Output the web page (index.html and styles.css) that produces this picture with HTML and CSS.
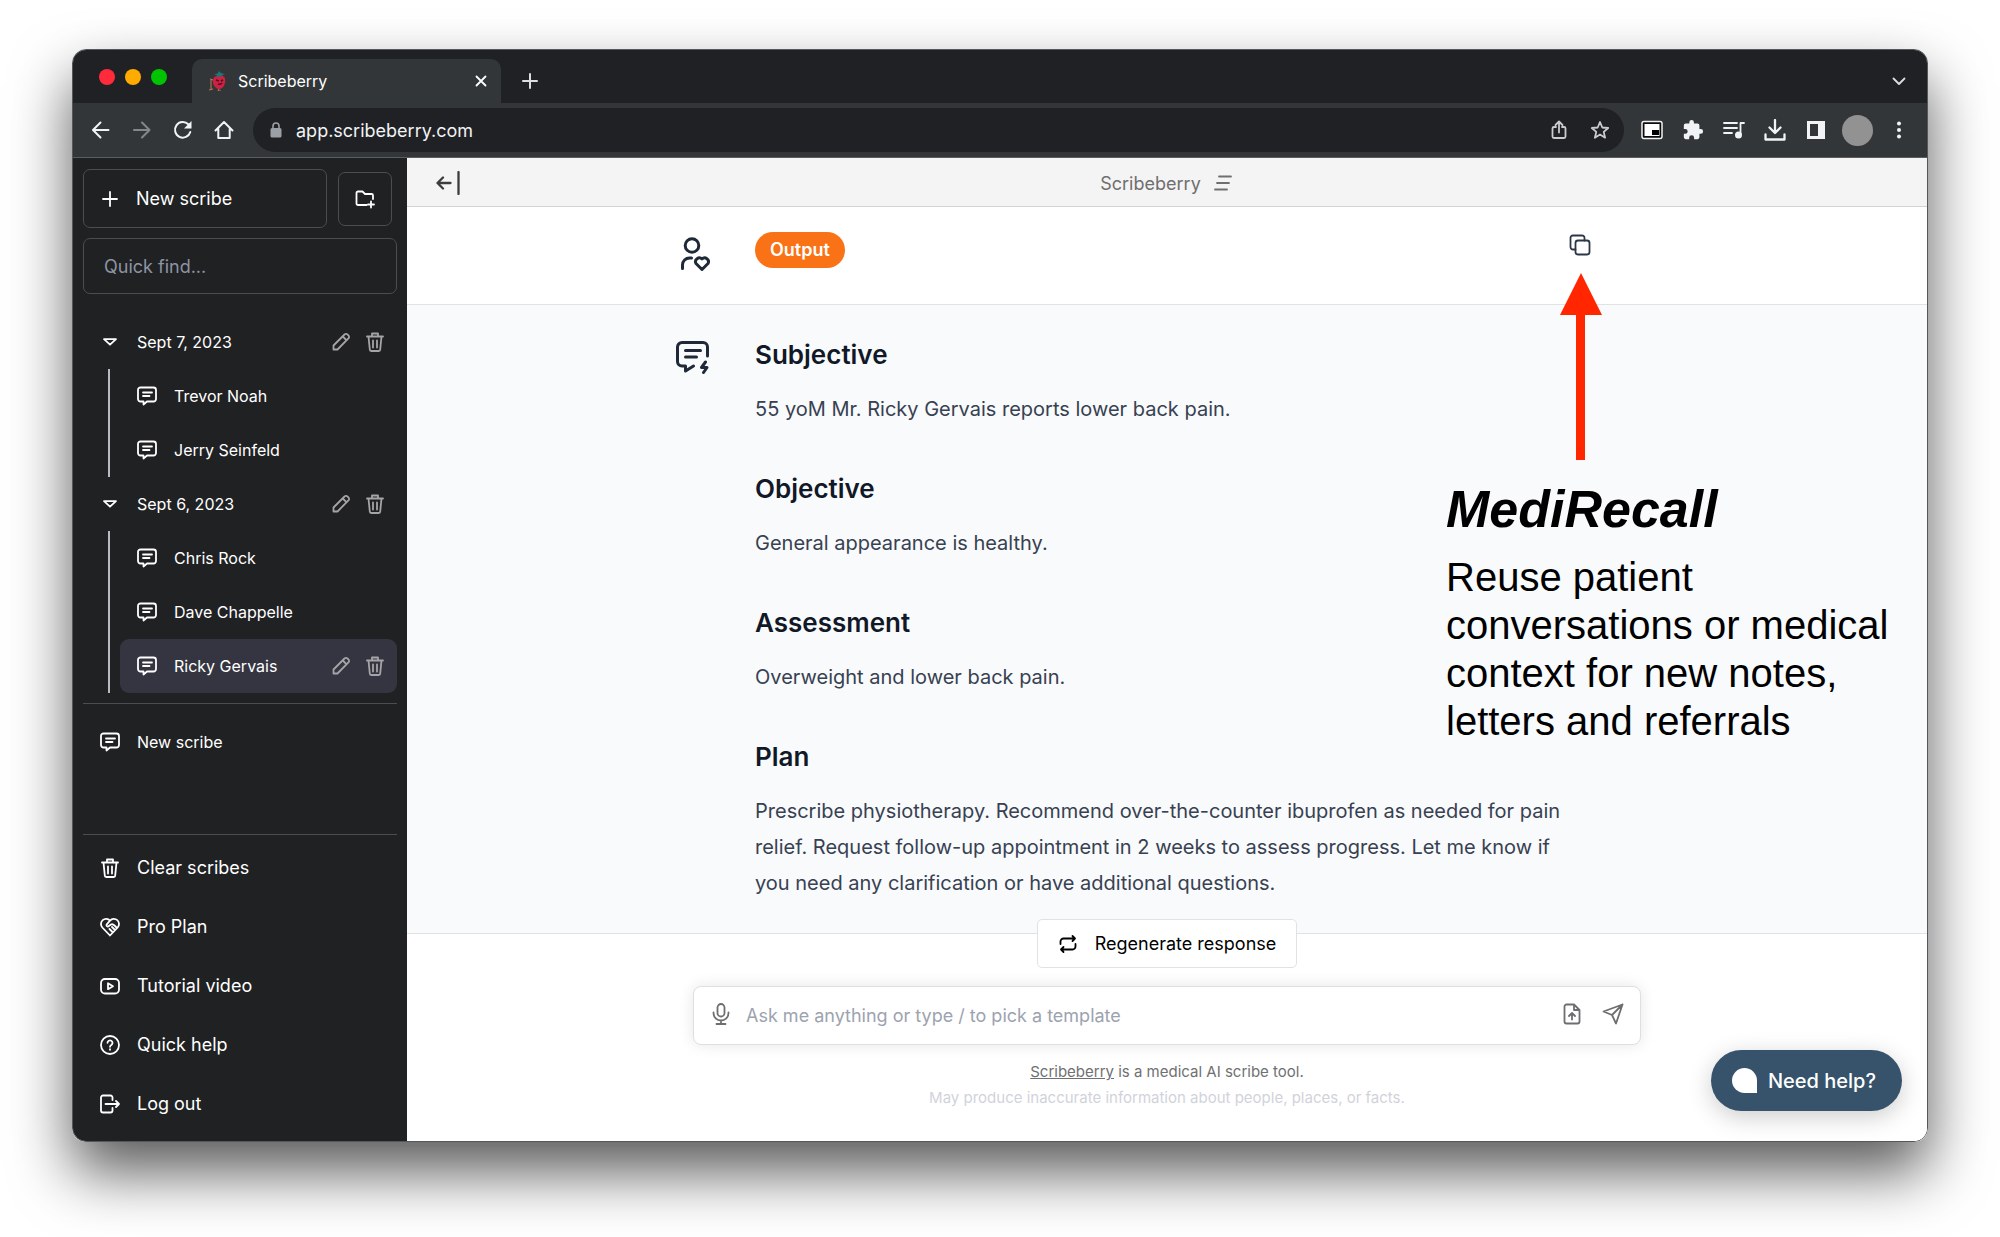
FILE: index.html
```html
<!DOCTYPE html>
<html lang="en">
<head>
<meta charset="utf-8">
<meta name="viewport" content="width=device-width, initial-scale=1">
<title>Scribeberry</title>
<link rel="stylesheet" href="styles.css">
</head>
<body>
<svg class="sprite" aria-hidden="true">
  <symbol id="i-message" viewBox="0 0 20 20"><path d="M3.500 1.500h13a2.500 2.500 0 0 1 2.500 2.500v9a2.500 2.500 0 0 1-2.500 2.500H10L6.500 18.500v-3h-3A2.500 2.500 0 0 1 1 13V4a2.500 2.500 0 0 1 2.500-2.500zM6 6.500h9M6 10h6.500"/></symbol>
  <symbol id="i-pencil" viewBox="0 0 20 20"><path d="M2.500 17.500v-4L13.500 2.500a2 2 0 0 1 3 0l.9.9a2 2 0 0 1 0 3L6.500 17.500zM11.800 4.500l3.800 3.800"/></symbol>
  <symbol id="i-trash" viewBox="0 0 20 20"><path d="M2 4.500h16M3.500 4.500l1.300 13a1.500 1.500 0 0 0 1.500 1.500h7.400a1.500 1.500 0 0 0 1.500-1.500l1.300-13M7 4.500V1.500h6v3M8 8.500v7M12 8.500v7"/></symbol>
  <symbol id="i-caret" viewBox="0 0 20 20"><path d="M4 7.200h12L10 12.700z"/></symbol>
  <symbol id="i-plus" viewBox="0 0 20 20"><path d="M10 3v14M3 10h14"/></symbol>
</svg>

<div class="window">
  <div class="tabstrip">
    <div class="lights"><span class="light red"></span><span class="light amber"></span><span class="light green"></span></div>
    <div class="tab">
      <svg class="favicon" viewBox="0 0 20 20" aria-hidden="true"><path d="M8 5q6-3 9 2 1 4-1 8-3 4-6 3-4-2-5-6-1-5 3-7z" fill="#cf1f43"/><path d="M6 4l4-2 1-2 2 2 4 1-3 1 1 2-3-1-3 2V4z" fill="#1f7775"/><path d="M3 9v9M5 9L2 8M5 18l-4 1M11 18l-1 2h3" stroke="#b58052" fill="none"/><path d="M8 9l3 1M15 9l-2 1M10 13q2 1 4-1" stroke="#4d0b25" stroke-width="1.500" fill="none"/></svg>
      <span class="tab-title">Scribeberry</span>
      <button class="bare" aria-label="Close tab"><svg class="s20 line" viewBox="0 0 20 20"><path d="M5.500 5.500l9 9M14.500 5.500l-9 9"/></svg></button>
    </div>
    <button class="bare newtab" aria-label="New tab"><svg class="s20 line" viewBox="0 0 20 20"><path d="M10 3v14M3 10h14"/></svg></button>
    <button class="bare tabsearch" aria-label="Search tabs"><svg class="s20 line" viewBox="0 0 20 20"><path d="M4.500 7.500L10 13l5.500-5.500"/></svg></button>
  </div>

  <div class="toolbar">
    <div class="nav">
      <button class="bare" aria-label="Back"><svg class="s20 line" viewBox="0 0 20 20"><path d="M17.500 10H2.500M9.500 2.500L2 10l7.500 7.500"/></svg></button>
      <button class="bare dim" aria-label="Forward"><svg class="s20 line" viewBox="0 0 20 20"><path d="M2 10h15M10 2.500l7.500 7.500-7.500 7.500"/></svg></button>
      <button class="bare" aria-label="Reload"><svg class="s20 line" viewBox="0 0 20 20"><path d="M17.300 12a7.800 7.800 0 1 1-2-7.700L17 6"/><path d="M18.500 1v7.500H11z" fill="currentColor" stroke="none"/></svg></button>
      <button class="bare" aria-label="Home"><svg class="s20 line" viewBox="0 0 20 20"><path d="M1.500 10.500L10 2l8.500 8.500M4.300 8.500v9.500h11.400V8.500"/></svg></button>
    </div>
    <div class="omnibox">
      <svg class="lock" viewBox="0 0 12 16" aria-hidden="true"><rect x="0.500" y="6" width="11" height="9.500" rx="1.500" fill="currentColor"/><path d="M3 7V4a3 3 0 0 1 6 0v3" fill="none" stroke="currentColor" stroke-width="1.600"/></svg>
      <input class="url" aria-label="Address" value="app.scribeberry.com">
      <button class="bare" aria-label="Share"><svg class="s20 line soft" viewBox="0 0 20 20"><path d="M7 7H5a1.500 1.500 0 0 0-1.500 1.500v8A1.500 1.500 0 0 0 5 18h10a1.500 1.500 0 0 0 1.500-1.500v-8A1.500 1.500 0 0 0 15 7h-2M10 12.500V2M6.500 5L10 1.500 13.500 5"/></svg></button>
      <button class="bare" aria-label="Bookmark"><svg class="s20 line soft" viewBox="0 0 20 20"><path d="M10 2l2.300 5.500 5.900.5-4.500 3.900 1.400 5.800L10 14.600l-5.100 3.100 1.400-5.800L1.800 8l5.900-.5z"/></svg></button>
    </div>
    <div class="actions">
      <button class="bare" aria-label="Picture in picture"><svg class="s22" viewBox="0 0 22 22"><rect x="1" y="2.500" width="20" height="17" rx="2" fill="#0c0c0c" stroke="#f1f3f4" stroke-width="1.500"/><path d="M3.500 5h15v12h-15z" fill="#fff"/><path d="M11 11h7v5h-7z" fill="#000"/></svg></button>
      <button class="bare" aria-label="Extensions"><svg class="s22" viewBox="0 0 24 24"><path fill="currentColor" d="M20.500 11H19V7a2 2 0 0 0-2-2h-4V3.500a2.500 2.500 0 0 0-5 0V5H4a2 2 0 0 0-2 2v3.800h1.500a2.700 2.700 0 0 1 0 5.400H2V20a2 2 0 0 0 2 2h3.800v-1.500a2.700 2.700 0 0 1 5.400 0V22H17a2 2 0 0 0 2-2v-4h1.500a2.500 2.500 0 0 0 0-5z"/></svg></button>
      <button class="bare" aria-label="Media"><svg class="s22 line" viewBox="0 0 22 22"><path d="M1 4h13M1 9h13M1 14h8M21 4h-3.500v11"/><circle cx="15.500" cy="16" r="2.600" fill="currentColor"/></svg></button>
      <button class="bare" aria-label="Downloads"><svg class="s22 line thick" viewBox="0 0 22 22"><path d="M11 1v12.500M5.500 8.500l5.500 5.500 5.500-5.500M1.500 15.500v5h19v-5"/></svg></button>
      <button class="bare" aria-label="Side panel"><svg class="s22" viewBox="0 0 22 22"><path fill="currentColor" fill-rule="evenodd" d="M2 2h18v18H2zM5 5v12h8V5z"/></svg></button>
      <button class="avatar" aria-label="Profile"></button>
      <button class="bare" aria-label="Menu"><svg class="s22" viewBox="0 0 22 22" fill="currentColor"><circle cx="11" cy="4.500" r="2"/><circle cx="11" cy="11" r="2"/><circle cx="11" cy="17.500" r="2"/></svg></button>
    </div>
  </div>

  <div class="app">
    <aside class="sidebar">
      <div class="create">
        <button class="new-scribe"><svg class="s20 line"><use href="#i-plus"/></svg>New scribe</button>
        <button class="new-folder" aria-label="New folder"><svg class="s20 line" viewBox="0 0 20 20"><path d="M11.500 16H3a1.500 1.500 0 0 1-1.500-1.500V4A1.500 1.500 0 0 1 3 2.500h4.500L10 5h6.500A1.500 1.500 0 0 1 18 6.500V10M16 12.500v6M13 15.500h6"/></svg></button>
      </div>
      <input class="find" type="search" aria-label="Quick find" placeholder="Quick find...">

      <nav class="folders">
        <div class="row"><svg class="s20 line"><use href="#i-caret"/></svg><span class="name">Sept 7, 2023</span><button class="bare tool" aria-label="Rename"><svg class="s20 line"><use href="#i-pencil"/></svg></button><button class="bare tool" aria-label="Delete"><svg class="s20 line"><use href="#i-trash"/></svg></button></div>
        <ul class="scribes">
          <li class="row"><svg class="s20 line"><use href="#i-message"/></svg><a class="name" href="#">Trevor Noah</a></li>
          <li class="row"><svg class="s20 line"><use href="#i-message"/></svg><a class="name" href="#">Jerry Seinfeld</a></li>
        </ul>
        <div class="row"><svg class="s20 line"><use href="#i-caret"/></svg><span class="name">Sept 6, 2023</span><button class="bare tool" aria-label="Rename"><svg class="s20 line"><use href="#i-pencil"/></svg></button><button class="bare tool" aria-label="Delete"><svg class="s20 line"><use href="#i-trash"/></svg></button></div>
        <ul class="scribes">
          <li class="row"><svg class="s20 line"><use href="#i-message"/></svg><a class="name" href="#">Chris Rock</a></li>
          <li class="row"><svg class="s20 line"><use href="#i-message"/></svg><a class="name" href="#">Dave Chappelle</a></li>
          <li class="row current"><svg class="s20 line"><use href="#i-message"/></svg><a class="name" href="#">Ricky Gervais</a><button class="bare tool" aria-label="Rename"><svg class="s20 line"><use href="#i-pencil"/></svg></button><button class="bare tool" aria-label="Delete"><svg class="s20 line"><use href="#i-trash"/></svg></button></li>
        </ul>
      </nav>
      <div class="loose">
        <div class="row"><svg class="s20 line"><use href="#i-message"/></svg><a class="name" href="#">New scribe</a></div>
      </div>

      <div class="menu">
        <button class="menu-item"><svg class="s20 line"><use href="#i-trash"/></svg>Clear scribes</button>
        <button class="menu-item"><svg class="s20 line" viewBox="0 0 20 20"><path d="M10 18.500L2.300 10.500A4.700 4.700 0 0 1 10 3.600a4.700 4.700 0 0 1 7.700 6.900zM10 3.600L6.800 7.300a1.300 1.300 0 0 0 2 1.800L11 7.500c1.500-.8 2.500 0 3.500 1l2.500 2.500M9.500 12l2.500 2.500M12 10l2.500 2.500"/></svg>Pro Plan</button>
        <button class="menu-item"><svg class="s20 line" viewBox="0 0 20 20"><rect x="1" y="3" width="18" height="14.500" rx="4"/><path d="M8 7.200v6l5-3z"/></svg>Tutorial video</button>
        <button class="menu-item"><svg class="s20 line" viewBox="0 0 20 20"><circle cx="10" cy="10" r="9"/><path d="M7.500 7.800A2.500 2.500 0 1 1 11.300 10c-1 .6-1.300.9-1.300 1.800M10 14.200v.6"/></svg>Quick help</button>
        <button class="menu-item"><svg class="s20 line" viewBox="0 0 20 20"><path d="M12.500 6V3.500a2 2 0 0 0-2-2H3a2 2 0 0 0-2 2v13a2 2 0 0 0 2 2h7.500a2 2 0 0 0 2-2V14M5.500 10H19M16 7l3 3-3 3"/></svg>Log out</button>
      </div>
    </aside>

    <main class="main">
      <header class="bar">
        <button class="bare collapse" aria-label="Collapse sidebar"><svg class="collapse-icon line thick" viewBox="0 0 24 24"><path d="M14.500 12H2M7 6.500L1.500 12 7 17.500M22.500 1v22"/></svg></button>
        <h1 class="bar-title">Scribeberry</h1>
        <button class="bare" aria-label="Options"><svg class="s20 line" viewBox="0 0 20 20"><path d="M5 3.500h12M3 10h12M1 16.500h12"/></svg></button>
      </header>

      <section class="prompt">
        <div class="column">
          <svg class="role line" viewBox="0 0 34 34" aria-hidden="true"><circle cx="16" cy="8.500" r="6.800"/><path d="M6.500 31.500v-3.500a7 7 0 0 1 7-7h2M26 32.500l-6-6a3.800 3.800 0 0 1 6-4.500 3.800 3.800 0 0 1 6 4.500z"/></svg>
          <div><span class="pill">Output</span></div>
          <button class="bare copy" aria-label="Copy"><svg class="s22 line" viewBox="0 0 22 22"><rect x="6.500" y="6.500" width="14" height="14" rx="2.500"/><path d="M6.500 15.500H4A2.500 2.500 0 0 1 1.500 13V4A2.500 2.500 0 0 1 4 1.500h9A2.500 2.500 0 0 1 15.500 4v2.500"/></svg></button>
        </div>
      </section>

      <section class="answer">
        <div class="column">
          <svg class="role line" viewBox="0 0 34 34" aria-hidden="true"><path d="M31.500 16V7A4.500 4.500 0 0 0 27 2.500H6A4.500 4.500 0 0 0 1.500 7v14.500A4.500 4.500 0 0 0 6 26h3.500v5l8-5M9.500 10.500h15M9.500 17h11M29.500 22L25.500 27.500H31l-3.500 5"/></svg>
          <article class="note">
            <h2>Subjective</h2>
            <p>55 yoM Mr. Ricky Gervais reports lower back pain.</p>
            <h2>Objective</h2>
            <p>General appearance is healthy.</p>
            <h2>Assessment</h2>
            <p>Overweight and lower back pain.</p>
            <h2>Plan</h2>
            <p>Prescribe physiotherapy. Recommend over-the-counter ibuprofen as needed for pain relief. Request follow-up appointment in 2 weeks to assess progress. Let me know if you need any clarification or have additional questions.</p>
          </article>
        </div>
      </section>

      <footer class="foot">
        <button class="regen"><svg class="s20 line" viewBox="0 0 20 20"><path d="M2.500 10V7.500a3 3 0 0 1 3-3h11.500M14.500 2l2.500 2.500L14.500 7M17.500 10v2.500a3 3 0 0 1-3 3H3M5.500 13L3 15.500 5.500 18"/></svg>Regenerate response</button>
        <form class="composer">
          <button type="button" class="bare" aria-label="Dictate"><svg class="s22 line" viewBox="0 0 22 22"><rect x="7.500" y="1" width="7" height="12.500" rx="3.500"/><path d="M3.500 9.500v.5a7.500 7.500 0 0 0 15 0v-.5M11 17.500V21M6.500 21h9"/></svg></button>
          <input class="ask" aria-label="Message" placeholder="Ask me anything or type / to pick a template">
          <button type="button" class="bare" aria-label="Upload file"><svg class="s22 line" viewBox="0 0 22 22"><path d="M13 1.500H5.500a2 2 0 0 0-2 2v15a2 2 0 0 0 2 2h11a2 2 0 0 0 2-2V7zV7h5.500M11 16.500v-6M8 13l3-3 3 3"/></svg></button>
          <button type="button" class="bare" aria-label="Send"><svg class="s22 line" viewBox="0 0 22 22"><path d="M20.500 1.500L14 20.500l-4-8.500L1.500 8.500zM20.500 1.500L10 12"/></svg></button>
        </form>
        <p class="about"><a href="#">Scribeberry</a> is a medical AI scribe tool.</p>
        <p class="caution">May produce inaccurate information about people, places, or facts.</p>
      </footer>

      <div class="callout">
        <svg class="arrow" viewBox="0 0 42 187" aria-hidden="true"><path d="M21 0l21 42H25v145h-9V42H0z" fill="#ff2600"/></svg>
        <p class="callout-title">MediRecall</p>
        <p class="callout-text">Reuse patient conversations or medical context for new notes, letters and referrals</p>
      </div>
      <button class="help"><span class="bubble"></span>Need help?</button>
    </main>
  </div>
</div>
</body>
</html>
```
FILE: styles.css
```css
* { box-sizing: border-box; }

body {
  margin: 0;
  min-height: 100vh;
  padding: 49px 72px 95px;
  display: flex;
  background: #fff;
  font-family: Inter, "Liberation Sans", sans-serif;
  font-size: 16px;
}

h1, h2, p, ul { margin: 0; padding: 0; }
ul { list-style: none; }
button, input { font: inherit; color: inherit; }
svg { flex: none; display: block; }
a { color: inherit; }

.sprite { position: absolute; width: 0; height: 0; }
.line {
  fill: none;
  stroke: currentColor;
  stroke-width: 1.800;
  stroke-linecap: round;
  stroke-linejoin: round;
}
.thick { stroke-width: 2.300; }
.s20 { width: 20px; height: 20px; }
.s22 { width: 22px; height: 22px; }
.bare { padding: 0; border: 0; background: none; display: flex; }

.window {
  flex: 1;
  min-width: 0;
  display: flex;
  flex-direction: column;
  border: 1px solid #55585a;
  border-radius: 14px;
  overflow: hidden;
  box-shadow: 0 30px 60px rgba(0, 0, 0, .65);
}

/* Browser chrome */
.tabstrip {
  height: 53px;
  padding: 9px 18px 0 26px;
  display: flex;
  align-items: flex-start;
  background: #202124;
  color: #dcdee1;
}
.lights { display: flex; gap: 10px; margin: 10px 25px 0 0; }
.light { width: 16px; height: 16px; border-radius: 50%; }
.red { background: #ff2b3a; }
.amber { background: #ffab00; }
.green { background: #00c400; }
.tab {
  width: 309px;
  height: 44px;
  padding: 0 10px 0 16px;
  display: flex;
  align-items: center;
  gap: 10px;
  border-radius: 10px 10px 0 0;
  background: #323639;
  color: #fff;
}
.favicon { width: 20px; height: 20px; }
.tab-title { flex: 1; }
.newtab { margin: 12px 0 0 19px; }
.newtab .line { stroke-width: 2; }
.tabsearch { margin: 12px 0 0 auto; }

.toolbar {
  height: 55px;
  padding: 0 17px 0 18px;
  display: flex;
  align-items: center;
  background: #323639;
  border-bottom: 1px solid #5b5e61;
  color: #f1f3f4;
}
.nav { display: flex; gap: 21px; margin-right: 19px; }
.nav .line { stroke-width: 2; }
.dim { color: #85888a; }
.omnibox {
  flex: 1;
  height: 44px;
  padding: 0 14px 0 17px;
  display: flex;
  align-items: center;
  border-radius: 22px;
  background: #202124;
}
.lock { width: 12px; height: 16px; margin-right: 14px; color: #9aa0a6; }
.url { flex: 1; min-width: 0; border: 0; padding: 0; background: none; outline: 0; font-size: 18px; }
.omnibox .bare + .bare { margin-left: 21px; }
.soft { color: #c9cccf; }
.actions { display: flex; align-items: center; gap: 19px; margin-left: 17px; }
.avatar { width: 31px; height: 31px; margin: 0 -4px; padding: 0; border: 0; border-radius: 50%; background: #929292; }

/* Sidebar */
.app { flex: 1; display: flex; }
.sidebar {
  width: 334px;
  flex: none;
  padding: 11px 10px 8px;
  display: flex;
  flex-direction: column;
  background: #202123;
  color: #fff;
}
.create { display: flex; align-items: center; gap: 11px; padding-right: 5px; }
.new-scribe, .new-folder, .find {
  border: 1px solid #4d4d4f;
  border-radius: 7px;
  background: none;
}
.new-scribe {
  flex: 1;
  height: 59px;
  padding: 0 16px;
  display: flex;
  align-items: center;
  gap: 16px;
  font-size: 18px;
}
.new-folder { width: 54px; height: 54px; padding: 0 16px; }
.find { height: 56px; margin-top: 10px; padding: 0 20px; font-size: 18px; appearance: none; }
.find::placeholder { color: #8e94a3; opacity: 1; }
.folders { margin-top: 21px; padding-bottom: 10px; border-bottom: 1px solid #4d4d4f; }
.row {
  height: 54px;
  padding: 0 12px 0 17px;
  display: flex;
  align-items: center;
  border-radius: 9px;
}
.name { flex: 1; margin-left: 17px; text-decoration: none; }
.tool { margin-left: 14px; color: #a5a5a7; }
.scribes { margin-left: 25px; padding-left: 10px; border-left: 2px solid #b9bac4; }
.current { background: #343541; }
.loose { flex: 1; padding-top: 11px; }
.menu { padding-top: 3px; border-top: 1px solid #4d4d4f; }
.menu-item {
  width: 100%;
  height: 59px;
  padding: 0 17px;
  display: flex;
  align-items: center;
  gap: 17px;
  border: 0;
  background: none;
  font-size: 18px;
}

/* Conversation */
.main { flex: 1; min-width: 0; position: relative; display: flex; flex-direction: column; background: #fff; }
.bar {
  height: 49px;
  padding-top: 2px;
  display: flex;
  align-items: center;
  justify-content: center;
  gap: 13px;
  background: #f4f4f4;
  border-bottom: 1px solid #d3d3d3;
  color: #6f6f6f;
}
.collapse { position: absolute; left: 29px; color: #3c3c3c; }
.collapse-icon { width: 24px; height: 24px; }
.bar-title { font-size: 18px; font-weight: 400; }
.column {
  max-width: 982px;
  margin: 0 auto;
  padding-right: 67px;
  display: flex;
  align-items: flex-start;
}
.role { width: 34px; height: 34px; margin-right: 45px; stroke-width: 3; color: #1f2937; }
.prompt { height: 98px; padding-top: 25px; border-bottom: 1px solid #e1e2e4; }
.prompt .role { margin-top: 5px; }
.pill {
  display: block;
  padding: 0 15px;
  border-radius: 18px;
  background: #f97316;
  color: #fff;
  font-size: 18px;
  font-weight: 600;
  line-height: 36px;
}
.copy { margin: 2px 0 0 auto; color: #2b3648; }
.answer { flex: 1; padding: 32px 0 31px; background: #f9fafc; border-bottom: 1px solid #e1e2e4; }
.answer .role { margin-top: 3px; }
.note { flex: 1; line-height: 36px; font-optical-sizing: none; }
.note h2 { margin-bottom: 18px; font-size: 26px; font-weight: 600; color: #111827; font-optical-sizing: auto; }
.note p { padding-right: 6px; font-size: 20px; color: #374151; }
.note p + h2 { margin-top: 44px; }

.foot { padding-bottom: 30px; display: flex; flex-direction: column; align-items: center; }
.regen {
  height: 49px;
  margin-top: -15px;
  padding: 0 20px;
  display: flex;
  align-items: center;
  gap: 17px;
  border: 1px solid #e2e2e4;
  border-radius: 5px;
  background: #fff;
  color: #000;
  font-size: 18px;
}
.composer {
  width: calc(100% - 40px);
  max-width: 948px;
  height: 59px;
  margin: 18px 0 14px;
  padding: 0 16px;
  display: flex;
  align-items: center;
  border: 1px solid #dfdfe1;
  border-radius: 8px;
  background: #fff;
  box-shadow: 0 0 15px rgba(0, 0, 0, .1);
  color: #6e6e70;
}
.ask { flex: 1; min-width: 0; margin: 0 14px; padding: 0; border: 0; background: none; outline: 0; font-size: 18px; }
.ask::placeholder { color: #9ca3af; opacity: 1; }
.composer .bare { margin-bottom: 4px; }
.composer .bare + .bare { margin-left: 19px; }
.about, .caution { font-size: 15px; line-height: 26px; color: #707072; }
.caution { color: #d1d3da; }

/* Overlays */
.callout {
  position: absolute;
  top: 115px;
  right: 0;
  width: 481px;
  color: #000;
  font-family: "Liberation Sans", Arial, sans-serif;
}
.arrow { width: 42px; height: 187px; margin-left: 114px; }
.callout-title { margin-top: 19px; font-size: 52px; line-height: 60px; font-weight: 700; font-style: italic; }
.callout-text { margin-top: 14px; padding-right: 20px; font-size: 40px; line-height: 48px; }
.help {
  position: absolute;
  right: 25px;
  bottom: 30px;
  height: 61px;
  padding: 0 26px 0 21px;
  display: flex;
  align-items: center;
  gap: 11px;
  border: 0;
  border-radius: 31px;
  background: #36536b;
  color: #fff;
  font-size: 20px;
  font-weight: 500;
  box-shadow: 0 6px 24px rgba(0, 0, 0, .2);
}
.bubble { width: 25px; height: 25px; border-radius: 13px 13px 0 13px; background: #fff; }
```
